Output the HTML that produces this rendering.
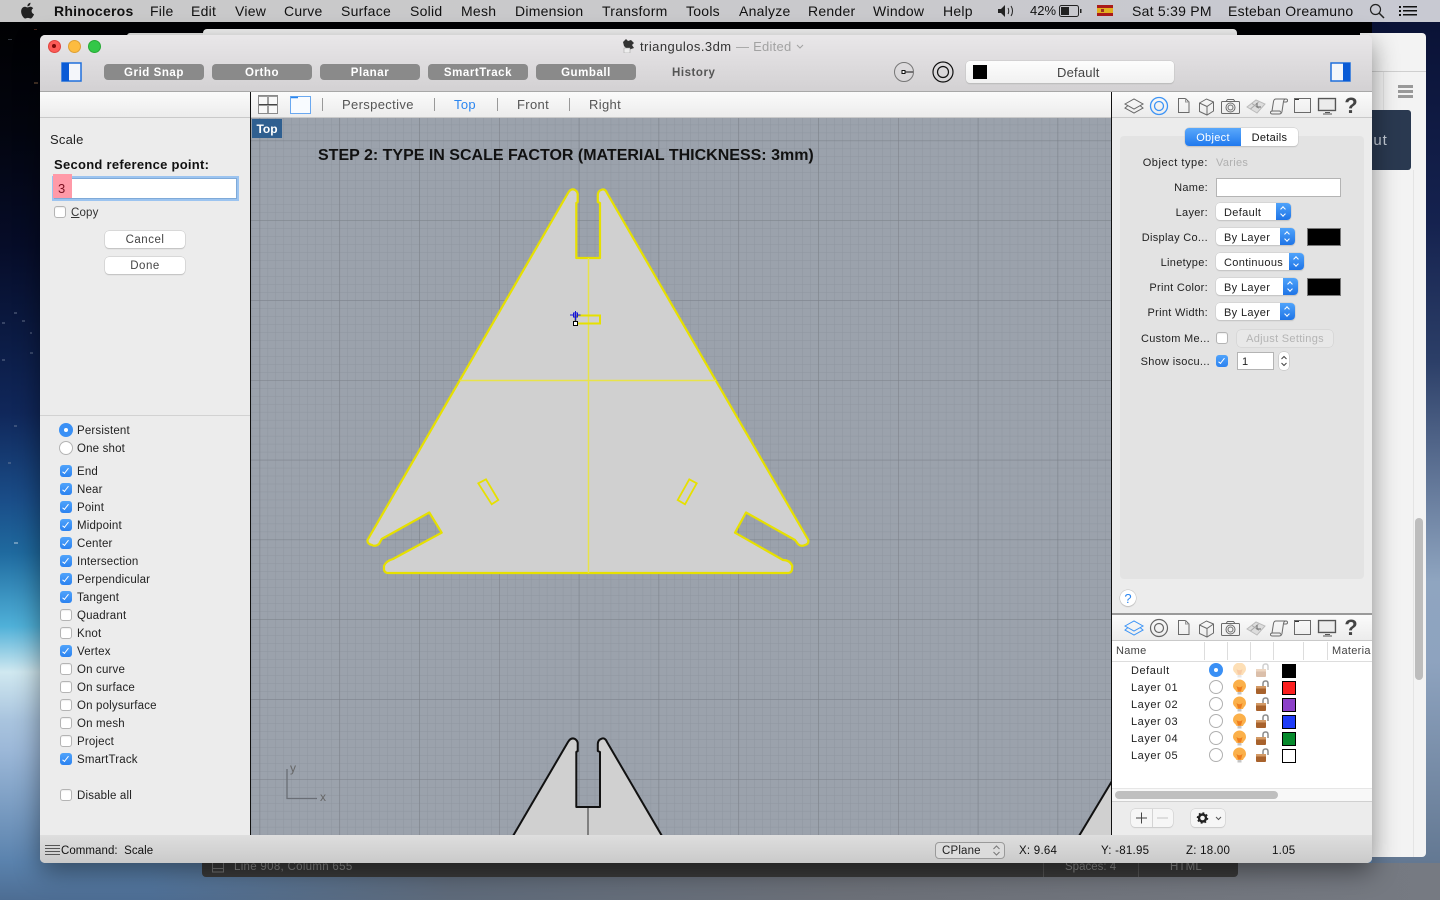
<!DOCTYPE html>
<html><head><meta charset="utf-8"><title>Rhinoceros</title>
<style>
html,body{margin:0;padding:0;width:1440px;height:900px;overflow:hidden;background:#000}
body{font-family:"Liberation Sans",sans-serif;position:relative}
div,span,svg{position:absolute}
.t{white-space:nowrap;line-height:14px;transform:translateY(-6px);color:#222;font-size:11.5px;letter-spacing:.17px}
.m{top:11px;font-size:14px;color:#111;letter-spacing:.25px;transform:translateY(-7px)}
.tb{top:64px;width:100px;height:16px;background:#8a8a8a;border-radius:4px;color:#fff;font-weight:bold;font-size:11.5px;line-height:18px;text-align:center;letter-spacing:.55px}
.vt{top:104px;font-size:13px;color:#555;letter-spacing:.35px}
.sep{top:98px;width:1px;height:13px;background:#999}
.cb{left:60px;width:10px;height:10px;border:1px solid #b4b4b4;border-radius:3px;background:#fff;box-shadow:inset 0 1px 1px #eee}
.ck{width:12px;height:12px;border-radius:3px;background:linear-gradient(#4fa3fb,#2b82f0)}
.ck::after{content:"";position:absolute;left:4.3px;top:1.5px;width:2.4px;height:6px;border:solid #fff;border-width:0 1.6px 1.6px 0;transform:rotate(38deg)}
.lb{color:#222;font-size:11px;letter-spacing:.3px;text-align:right;left:1120px;width:88px}
.dd{left:1216px;height:17px;background:#fff;border-radius:4px;box-shadow:0 0 0 .5px #c8c8c8,0 1px 1px #bbb;font-size:11px;line-height:21px;color:#222;letter-spacing:.35px;text-indent:8px}
.dd i{position:absolute;right:0;top:0;width:15px;height:17px;background:linear-gradient(#4fa3fb,#1f74e6);border-radius:0 4px 4px 0}
.dd i::before,.dd i::after{content:"";position:absolute;left:5px;width:3px;height:3px;border:solid #fff;border-width:1.2px 0 0 1.2px}
.dd i::before{top:4px;transform:rotate(45deg)}
.dd i::after{top:9px;transform:rotate(225deg)}
.sw{left:1307px;width:32px;height:16px;background:#000;border:1px solid #777}
.ly{left:1131px;font-size:11px;color:#222;letter-spacing:.55px}
.rd{left:1209px;width:12px;height:12px;border:1px solid #b0b0b0;border-radius:50%;background:#fff}
.ls{left:1282px;width:12px;height:12px;border:1px solid #000}
.btn{left:105px;width:80px;height:17px;background:#fff;border-radius:4px;box-shadow:0 0 0 .5px #c4c4c4,0 1px 1px #bbb;text-align:center;font-size:11.5px;line-height:19px;color:#444;letter-spacing:.5px}
.hd{top:642px;width:1px;height:18px;background:#ddd}
</style></head><body>

<!-- desktop -->
<div style="left:0;top:0;width:1440px;height:900px;background:linear-gradient(#000 0,#03050f 130px,#060c28 245px,#10275a 413px,#1a4d88 500px,#1f6a9f 553px,#4fb0d8 626px,#d0e8f0 672px,#a9c4de 720px,#9cb8d8 750px,#5a82ad 862px,#4d6d93 900px)"></div>
<div style="left:1372px;top:22px;width:68px;height:878px;background:linear-gradient(#0a1236 0,#15224f 200px,#2c3f68 340px,#8fa5c0 560px,#8ea3bf 640px,#5f748e 860px,#69727e 900px)"></div>
<div style="left:150px;top:863px;width:1290px;height:37px;background:linear-gradient(90deg,rgba(90,120,155,0),#5e6a7a 300px,#6c7078 700px,#767a82 1290px)"></div>
<svg style="left:0;top:22px" width="42" height="560"><g fill="#8a96ac" opacity=".35"><rect x="8" y="17" width="4" height="1"/><rect x="34" y="7" width="3" height="1" fill="#c86040"/><rect x="34" y="60" width="4" height="2" fill="#c89060"/><rect x="2" y="300" width="3" height="2"/><rect x="14" y="290" width="3" height="2"/><rect x="22" y="298" width="3" height="2"/><rect x="30" y="310" width="2" height="2"/><rect x="2" y="337" width="3" height="2"/><rect x="30" y="330" width="3" height="2"/><rect x="14" y="403" width="3" height="2"/><rect x="8" y="440" width="3" height="2"/><rect x="14" y="520" width="4" height="2" fill="#fff"/></g></svg>

<!-- back windows -->
<div style="left:1360px;top:33px;width:66px;height:824px;background:#f3f3f3;border-radius:0 4px 4px 0"></div>
<div style="left:1372px;top:71px;width:54px;height:1px;background:#cfcfcf"></div>
<div style="left:1383px;top:72px;width:1px;height:38px;background:#e2e2e2"></div>
<div style="left:1360px;top:110px;width:51px;height:60px;background:#2a3950;border-radius:0 3px 3px 0"></div>
<div class="t" style="left:1364px;top:140px;font-size:15px;color:#c4ccd6;letter-spacing:1px">out</div>
<div style="left:1398px;top:85px;width:15px;height:3px;background:#999;box-shadow:0 5px 0 #999,0 10px 0 #999"></div>
<div style="left:1413px;top:170px;width:1px;height:687px;background:#e4e4e4"></div>
<div style="left:1415px;top:518px;width:8px;height:162px;background:#bdbdbd;border-radius:4px"></div>
<div style="left:127px;top:33px;width:90px;height:6px;background:#e6e6e6;border-radius:3px 0 0 0"></div>
<div style="left:203px;top:29px;width:1034px;height:10px;background:#f2f2f2;border-radius:4px 4px 0 0"></div>
<div style="left:202px;top:855px;width:1036px;height:22px;background:#3a3a3a;border-radius:0 0 4px 4px"></div>
<svg style="left:212px;top:863px" width="13" height="11"><rect x=".5" y="-2" width="11" height="11" fill="none" stroke="#777"/><path d="M1 5.500h10" stroke="#777"/></svg>
<div class="t" style="left:234px;top:866px;color:#8a8a8a;font-size:11.5px;letter-spacing:.3px">Line 908, Column 655</div>
<div style="left:1043px;top:863px;width:1px;height:14px;background:#555"></div>
<div style="left:1138px;top:863px;width:1px;height:14px;background:#555"></div>
<div class="t" style="left:1065px;top:866px;color:#8a8a8a;font-size:11.5px;letter-spacing:0">Spaces: 4</div>
<div class="t" style="left:1170px;top:866px;color:#8a8a8a;font-size:11.5px">HTML</div>

<!-- menu bar -->
<div style="left:0;top:0;width:1440px;height:22px;background:linear-gradient(90deg,#c9c9c9,#c9c9cc 60%,#c8c9d2)"></div>
<svg style="left:20px;top:2px" width="16" height="17" viewBox="0 0 16 17"><path d="M11.6 9c0-1.800 1.500-2.700 1.600-2.800-.9-1.300-2.300-1.500-2.800-1.500-1.200-.1-2.300.7-2.900.7s-1.500-.7-2.500-.7C3.700 4.700 2.500 5.400 1.800 6.600.4 9 1.400 12.500 2.800 14.500c.7 1 1.500 2 2.500 2s1.400-.6 2.600-.6 1.600.6 2.600.6 1.800-1 2.400-2c.8-1.100 1.100-2.200 1.100-2.300-.1 0-2.400-.9-2.400-3.200zM9.700 3.200C10.200 2.500 10.600 1.600 10.500.7c-.8 0-1.700.5-2.300 1.200-.5.600-.9 1.500-.8 2.400.9.100 1.800-.4 2.300-1.100z" fill="#222"/></svg>
<div class="t m" style="left:54px;font-weight:bold">Rhinoceros</div>
<div class="t m" style="left:150px">File</div>
<div class="t m" style="left:191px">Edit</div>
<div class="t m" style="left:235px">View</div>
<div class="t m" style="left:284px">Curve</div>
<div class="t m" style="left:341px">Surface</div>
<div class="t m" style="left:410px">Solid</div>
<div class="t m" style="left:461px">Mesh</div>
<div class="t m" style="left:515px">Dimension</div>
<div class="t m" style="left:602px">Transform</div>
<div class="t m" style="left:686px">Tools</div>
<div class="t m" style="left:739px">Analyze</div>
<div class="t m" style="left:808px">Render</div>
<div class="t m" style="left:873px">Window</div>
<div class="t m" style="left:943px">Help</div>
<svg style="left:998px;top:4px" width="18" height="14" viewBox="0 0 18 14"><path d="M0 5h3l4-4v12l-4-4H0z" fill="#222"/><path d="M10 4c1 1.500 1 4.500 0 6M13 2c2 3 2 7 0 10" stroke="#222" fill="none"/></svg>
<div class="t m" style="left:1030px;font-size:13px;letter-spacing:0">42%</div>
<svg style="left:1059px;top:5px" width="24" height="13" viewBox="0 0 24 13"><rect x=".5" y=".5" width="19" height="11" rx="2" fill="none" stroke="#222"/><rect x="2" y="2" width="8" height="8" fill="#222"/><rect x="21" y="4" width="1.500" height="4" fill="#222"/></svg>
<svg style="left:1097px;top:5px" width="16" height="11"><rect width="16" height="11" fill="#aa1a1a"/><rect y="3" width="16" height="5" fill="#e2b020"/><rect x="4" y="4" width="3" height="3" fill="#a03020"/></svg>
<div class="t m" style="left:1132px">Sat 5:39 PM</div>
<div class="t m" style="left:1228px">Esteban Oreamuno</div>
<svg style="left:1369px;top:3px" width="16" height="16"><circle cx="6.500" cy="6.500" r="5" fill="none" stroke="#222" stroke-width="1.200"/><path d="M10 10l5 5" stroke="#222" stroke-width="1.500"/></svg>
<svg style="left:1399px;top:5px" width="18" height="12"><g fill="#111"><rect y="1" width="2" height="2"/><rect y="5" width="2" height="2"/><rect y="9" width="2" height="2"/><rect x="4" y="1" width="14" height="1.500"/><rect x="4" y="5" width="14" height="1.500"/><rect x="4" y="9" width="14" height="1.500"/></g></svg>

<!-- main window -->
<div style="left:40px;top:35px;width:1332px;height:828px;background:#ececec;border-radius:5px;box-shadow:0 8px 26px rgba(0,0,0,.45);overflow:hidden">
  <div style="left:0;top:0;width:1332px;height:56px;background:linear-gradient(#e9e7e9,#d3d1d3);border-bottom:1px solid #a8a8a8"></div>
  <div style="left:0;top:57px;width:1332px;height:25px;background:linear-gradient(#fbfbfb,#ececec);border-bottom:1px solid #c9c9c9"></div>
</div>
<div style="left:48px;top:40px;width:11px;height:11px;border-radius:50%;background:#fc5b57;border:.5px solid #e0443e"></div>
<div style="left:52px;top:44px;width:4px;height:4px;border-radius:50%;background:#7a0a08"></div>
<div style="left:68px;top:40px;width:11px;height:11px;border-radius:50%;background:#fdbc40;border:.5px solid #dea034"></div>
<div style="left:88px;top:40px;width:11px;height:11px;border-radius:50%;background:#33c748;border:.5px solid #27aa35"></div>

<svg style="left:622px;top:39px" width="13" height="14" viewBox="0 0 13 14"><path d="M1 3l3-3 2 2 3-1 3 3-2 2 2 3-3 1-2 1-2-1-3-3z" fill="#333"/><rect x="2" y="9" width="6" height="5" fill="#eee" stroke="#999" stroke-width=".5"/></svg>
<div class="t" style="left:640px;top:46px;font-size:13px;color:#333;letter-spacing:.45px">triangulos.3dm</div>
<div class="t" style="left:736px;top:46px;font-size:13px;color:#a2a2a2;letter-spacing:.25px">— Edited</div>
<svg style="left:796px;top:44px" width="8" height="6"><path d="M1 1l3 3 3-3" fill="none" stroke="#a2a2a2"/></svg>

<svg style="left:61px;top:62px" width="21" height="20"><rect x="1" y="1" width="19" height="18" fill="#f4f6fa" stroke="#1f6fdc" stroke-width="1.500"/><rect x="1" y="1" width="7" height="18" fill="#0a5bd6"/></svg>
<div class="tb" style="left:104px">Grid Snap</div>
<div class="tb" style="left:212px">Ortho</div>
<div class="tb" style="left:320px">Planar</div>
<div class="tb" style="left:428px">SmartTrack</div>
<div class="tb" style="left:536px">Gumball</div>
<div class="t" style="left:672px;top:72px;font-weight:bold;font-size:11.5px;color:#555;letter-spacing:.55px">History</div>
<svg style="left:893px;top:61px" width="22" height="22"><circle cx="11" cy="11" r="9.500" fill="none" stroke="#777"/><rect x="9" y="9.500" width="3" height="3" fill="#fff" stroke="#111"/><path d="M12 11h8" stroke="#111"/></svg>
<svg style="left:932px;top:61px" width="22" height="22"><circle cx="11" cy="11" r="10" fill="none" stroke="#111" stroke-width="1.200"/><circle cx="11" cy="11" r="5.500" fill="none" stroke="#111" stroke-width="1.200"/></svg>
<div style="left:966px;top:61px;width:208px;height:22px;background:linear-gradient(#fdfdfd,#f1f1f1);border-radius:4px;box-shadow:0 0 0 .5px #c4c4c4,0 1px 1px #b0b0b0"></div>
<div style="left:973px;top:65px;width:14px;height:14px;background:#000"></div>
<div class="t" style="left:1057px;top:72px;font-size:13px;color:#444;letter-spacing:.2px">Default</div>
<svg style="left:1330px;top:62px" width="21" height="20"><rect x="1" y="1" width="19" height="18" fill="#f4f6fa" stroke="#1f6fdc" stroke-width="1.500"/><rect x="13" y="1" width="7" height="18" fill="#0a5bd6"/></svg>

<!-- viewport tabs -->
<div style="left:250px;top:92px;width:1px;height:743px;background:#111"></div>
<div style="left:1111px;top:92px;width:1px;height:743px;background:#111"></div>
<svg style="left:257px;top:94px" width="22" height="21"><rect x="1.500" y="1.500" width="19" height="18" fill="#f8f8f8" stroke="#8a8a8a"/><path d="M11 2v17M2 10.500h18" stroke="#444"/><path d="M2 2.500h8M12 2.500h8M2 11.500h8M12 11.500h8" stroke="#999"/></svg>
<svg style="left:289px;top:95px" width="23" height="20"><rect x="1.500" y="1.500" width="20" height="17" fill="#f8fbff" stroke="#6aa8f0"/><path d="M2 2.500h7" stroke="#2a86f0" stroke-width="1.500"/></svg>
<div class="sep" style="left:322px"></div>
<div class="sep" style="left:434px"></div>
<div class="sep" style="left:497px"></div>
<div class="sep" style="left:569px"></div>
<div class="t vt" style="left:342px">Perspective</div>
<div class="t vt" style="left:454px;color:#2b86f0">Top</div>
<div class="t vt" style="left:517px">Front</div>
<div class="t vt" style="left:589px">Right</div>

<!-- viewport -->
<svg style="left:251px;top:118px" width="860" height="717" viewBox="251 118 860 717">
<defs>
<pattern id="mi" x="339.4" y="220.4" width="7.98" height="7.98" patternUnits="userSpaceOnUse"><path d="M0 0H7.980M0 0V7.980" stroke="#8f96a0" stroke-width="1" fill="none"/></pattern>
<pattern id="ma" x="339.4" y="220.4" width="79.8" height="79.8" patternUnits="userSpaceOnUse"><path d="M0 0H79.800M0 0V79.800" stroke="#7b8089" stroke-width="1.100" fill="none"/></pattern>
</defs>
<rect x="251" y="118" width="860" height="717" fill="#9ba2ac"/>
<rect x="251" y="118" width="860" height="717" fill="url(#mi)"/>
<rect x="251" y="118" width="860" height="717" fill="url(#ma)"/>
<path d="M367.500 540 L568 193 Q571 188 575 190 Q578 192 577.700 195 L577.700 202 L576.300 203 L576.300 258 L600 258 L600 203 L597.800 202 L597.800 195 Q598 191 601 190 Q605 188 607 193 L808.300 540 Q809 544 805 545 Q801 547 798 544 L795 540 L746 512.500 L735 532.700 L783 560 Q790 560 792.300 566 L792 570 Q791 573 788 573 L388 573 Q385 573 384 570 L384 566 Q386 561 393 559 L441.700 532.700 L429.300 512.500 L381.700 539 L379 544 Q375 547 372 545 Q367 544 367.500 540 Z" fill="#d0d0d0" stroke="#e6e000" stroke-width="2.200" stroke-linejoin="round"/>
<path d="M588.500 258V573" stroke="#e8e34a" stroke-width="1.500"/>
<path d="M460 380.500H716" stroke="#e8e34a" stroke-width="1.500"/>
<path d="M478.300 483.300L486 479.300L498.300 500L491.700 504.300Z M696.700 483.300L689.300 479.300L677.700 500L685 504.300Z" fill="none" stroke="#e6e000" stroke-width="1.800"/>
<path d="M576 315.500H600V323.500H576" fill="none" stroke="#e6e000" stroke-width="2"/>
<path d="M575.500 316V323" stroke="#333" stroke-width="1.500"/>
<path d="M570 315H580.500M575.500 311V320" stroke="#1414d8" stroke-width="1"/>
<rect x="573.500" y="313" width="4" height="4" fill="none" stroke="#1414d8"/>
<rect x="573.500" y="321.500" width="4" height="4" fill="#fff" stroke="#000"/>
<!-- lower copy -->
<path d="M513 836 L568 742 Q571 737 575 739 Q578 741 577.700 744 L577.700 751 L576.300 752 L576.300 807 L600 807 L600 752 L597.800 751 L597.800 744 Q598 740 601 739 Q605 737 607 742 L662 836 Z" fill="#d0d0d0" stroke="#111" stroke-width="2" stroke-linejoin="round"/>
<path d="M588 808V836" stroke="#666" stroke-width="1.500"/>
<path d="M1079 836L1112 781V836Z" fill="#d0d0d0"/>
<path d="M1079 836L1112 781" stroke="#111" stroke-width="2"/>
<path d="M287 769V798.500H317" fill="none" stroke="#6a6e76" stroke-width="1.300"/>
</svg>
<div class="t" style="left:290px;top:767px;font-size:12px;color:#666">y</div>
<div class="t" style="left:320px;top:796px;font-size:12px;color:#666">x</div>
<div style="left:252px;top:119px;width:30px;height:19px;background:#2f5f90;color:#fff;font-weight:bold;font-size:12px;line-height:21px;text-align:center">Top</div>
<div class="t" style="left:318px;top:155px;font-weight:bold;font-size:16px;color:#111;letter-spacing:0">STEP 2: TYPE IN SCALE FACTOR (MATERIAL THICKNESS: 3mm)</div>

<!-- left panel -->
<div class="t" style="left:50px;top:139px;font-size:13px;color:#222;letter-spacing:.2px">Scale</div>
<div class="t" style="left:54px;top:163.500px;font-size:13px;font-weight:bold;color:#111;letter-spacing:.28px">Second reference point:</div>
<div style="left:54px;top:178px;width:181px;height:19px;background:#fff;border:1px solid #7faad8;box-shadow:0 0 0 2px #9cc4f0"></div>
<div style="left:53px;top:174px;width:19px;height:24px;background:#ff9aa8"></div>
<div class="t" style="left:58px;top:187.500px;font-size:13px;color:#7a1020">3</div>
<div class="cb" style="left:54px;top:206px"></div>
<div class="t" style="left:71px;top:212px;font-size:11.5px;color:#333"><u>C</u>opy</div>
<div class="btn" style="top:231px">Cancel</div>
<div class="btn" style="top:257px">Done</div>
<div style="left:40px;top:415px;width:210px;height:1px;background:#d2d2d2"></div>

<div style="left:59px;top:423px;width:14px;height:14px;border-radius:50%;background:#3a90f5"></div>
<div style="left:64px;top:428px;width:4px;height:4px;border-radius:50%;background:#fff"></div>
<div style="left:59px;top:441px;width:12px;height:12px;border-radius:50%;background:#fff;border:1px solid #b4b4b4"></div>
<div class="t" style="left:77px;top:430px">Persistent</div>
<div class="t" style="left:77px;top:448px">One shot</div>

<div class="ck" style="left:60px;top:465px"></div><div class="t" style="left:77px;top:471px">End</div>
<div class="ck" style="left:60px;top:483px"></div><div class="t" style="left:77px;top:489px">Near</div>
<div class="ck" style="left:60px;top:501px"></div><div class="t" style="left:77px;top:507px">Point</div>
<div class="ck" style="left:60px;top:519px"></div><div class="t" style="left:77px;top:525px">Midpoint</div>
<div class="ck" style="left:60px;top:537px"></div><div class="t" style="left:77px;top:543px">Center</div>
<div class="ck" style="left:60px;top:555px"></div><div class="t" style="left:77px;top:561px">Intersection</div>
<div class="ck" style="left:60px;top:573px"></div><div class="t" style="left:77px;top:579px">Perpendicular</div>
<div class="ck" style="left:60px;top:591px"></div><div class="t" style="left:77px;top:597px">Tangent</div>
<div class="cb" style="top:609px"></div><div class="t" style="left:77px;top:615px">Quadrant</div>
<div class="cb" style="top:627px"></div><div class="t" style="left:77px;top:633px">Knot</div>
<div class="ck" style="left:60px;top:645px"></div><div class="t" style="left:77px;top:651px">Vertex</div>
<div class="cb" style="top:663px"></div><div class="t" style="left:77px;top:669px">On curve</div>
<div class="cb" style="top:681px"></div><div class="t" style="left:77px;top:687px">On surface</div>
<div class="cb" style="top:699px"></div><div class="t" style="left:77px;top:705px">On polysurface</div>
<div class="cb" style="top:717px"></div><div class="t" style="left:77px;top:723px">On mesh</div>
<div class="cb" style="top:735px"></div><div class="t" style="left:77px;top:741px">Project</div>
<div class="ck" style="left:60px;top:753px"></div><div class="t" style="left:77px;top:759px">SmartTrack</div>
<div class="cb" style="top:789px"></div><div class="t" style="left:77px;top:795px">Disable all</div>

<!-- status bar -->
<div style="left:40px;top:835px;width:1332px;height:28px;background:linear-gradient(#dedede,#cacaca);border-radius:0 0 5px 5px"></div>
<svg style="left:45px;top:845px" width="15" height="11"><path d="M0 .5h15M0 3.500h15M0 6.500h15M0 9.500h15" stroke="#555"/></svg>
<div class="t" style="left:61px;top:850px;font-size:11.5px;color:#111;letter-spacing:.05px">Command:&nbsp; Scale</div>
<div style="left:935px;top:842px;width:68px;height:15px;border:1px solid #9a9a9a;border-radius:4px;background:#dcdcdc"></div>
<div class="t" style="left:942px;top:850px;font-size:11.5px;color:#222">CPlane</div>
<svg style="left:992px;top:844px" width="9" height="13"><path d="M1.500 5L4.500 2l3 3M1.500 8l3 3 3-3" fill="none" stroke="#777"/></svg>
<div class="t" style="left:1019px;top:850px;color:#111;letter-spacing:.25px">X: 9.64</div>
<div class="t" style="left:1101px;top:850px;color:#111;letter-spacing:.25px">Y: -81.95</div>
<div class="t" style="left:1186px;top:850px;color:#111;letter-spacing:.25px">Z: 18.00</div>
<div class="t" style="left:1272px;top:850px;color:#111;letter-spacing:.25px">1.05</div>

<!-- right panel -->
<div style="left:1112px;top:92px;width:260px;height:743px;background:#ececec"></div>
<div style="left:1112px;top:92px;width:260px;height:25px;background:linear-gradient(#fbfbfb,#ececec);border-bottom:1px solid #c9c9c9"></div>
<svg width="0" height="0" style="left:0;top:0"><defs>
<g id="rest" fill="none" stroke="#6a6a6a" stroke-width="1">
<path d="M1178.500 98.500h7l3.500 3.500v10.500h-10.500z"/><path d="M1185.500 98.500v3.500h3.500" stroke="#999"/>
<path d="M1199.500 103l7-4 7 3v9l-6.500 4-7.500-3.500zM1199.500 103l7.500 3.500 6.500-4.500M1207 106.500v8.500"/>
<rect x="1221.500" y="101.500" width="18" height="12" rx="1"/><path d="M1226 101.500l1.500-2h6l1.500 2"/><circle cx="1230.500" cy="107.500" r="4.500"/><circle cx="1230.500" cy="107.500" r="2.500"/>
<path d="M1247 107l9-7 9 4-8 9z" stroke="#bbb" fill="#ddd"/><path d="M1252 103.500l7 5M1250.500 109l8-7" stroke="#aaa"/><path d="M1257 103v4h4" stroke="#666"/>
<path d="M1276 99h10q1.500 0 1.500 1.500t-1.500 1.500h-2M1276 99q-2 0-2.500 2.500l-1.500 9.500M1286 99q-2 0-2.500 2.500l-1.500 10q-.5 2.500-3 2.500h-6.500q-2 0-2-1.500t2-1.500h7q1 0 1 1.500"/>
<rect x="1294.500" y="98.500" width="16" height="14"/><path d="M1295 99.500h4" stroke="#333"/>
<rect x="1318.500" y="98.500" width="17" height="12" fill="#ddd" stroke="#555" stroke-width="1.300"/><rect x="1320" y="100" width="14" height="9" fill="#ececec" stroke="none"/><path d="M1325 112.500h5M1323 114h9" stroke="#555"/>
</g></defs></svg>
<svg style="left:1112px;top:92px" width="260" height="26" viewBox="1112 92 260 26">
<use href="#rest"/>
<path d="M1125 104l9-5 9 5-9 5zM1127.500 106l-2.500 2 9 5 9-5-2.500-2" fill="none" stroke="#666" stroke-width="1"/>
<circle cx="1159" cy="106" r="8.500" fill="none" stroke="#3d94f6" stroke-width="1.300"/><circle cx="1159" cy="106" r="4.500" fill="none" stroke="#3d94f6" stroke-width="1.300"/>
</svg>
<div style="left:1343px;top:97px;width:16px;text-align:center;font-weight:bold;font-size:22px;line-height:18px;color:#444">?</div>

<div style="left:1120px;top:136px;width:244px;height:443px;background:#e3e3e3;border-radius:4px"></div>
<div style="left:1185px;top:128px;width:113px;height:18px;background:#fff;border-radius:4px;box-shadow:0 0 0 .5px #c8c8c8,0 1px 1px #bbb"></div>
<div style="left:1185px;top:128px;width:56px;height:18px;background:linear-gradient(#5aa8fb,#2079ee);border-radius:4px 0 0 4px;color:#fff;font-size:11px;line-height:20px;text-align:center;letter-spacing:.3px">Object</div>
<div style="left:1241px;top:128px;width:57px;height:18px;color:#111;font-size:11px;line-height:20px;text-align:center;letter-spacing:.3px">Details</div>

<div class="t lb" style="top:162px;letter-spacing:.55px">Object type:</div>
<div class="t" style="left:1216px;top:162px;font-size:11px;color:#b0b0b0;letter-spacing:.3px">Varies</div>
<div class="t lb" style="top:187px">Name:</div>
<div style="left:1216px;top:178px;width:123px;height:17px;background:#fff;border:1px solid #b4b4b4"></div>
<div class="t lb" style="top:212px">Layer:</div>
<div class="dd" style="top:203px;width:75px">Default<i></i></div>
<div class="t lb" style="top:237px">Display Co...</div>
<div class="dd" style="top:228px;width:79px">By Layer<i></i></div>
<div class="sw" style="top:228px"></div>
<div class="t lb" style="top:262px">Linetype:</div>
<div class="dd" style="top:253px;width:88px">Continuous<i></i></div>
<div class="t lb" style="top:287px">Print Color:</div>
<div class="dd" style="top:278px;width:82px">By Layer<i></i></div>
<div class="sw" style="top:278px"></div>
<div class="t lb" style="top:312px">Print Width:</div>
<div class="dd" style="top:303px;width:79px">By Layer<i></i></div>
<div class="t lb" style="top:338px;left:1122px;width:88px">Custom Me...</div>
<div class="cb" style="left:1216px;top:332px"></div>
<div style="left:1237px;top:330px;width:96px;height:17px;background:#e8e8e8;border-radius:4px;box-shadow:0 0 0 .5px #ccc;text-align:center;font-size:11px;line-height:19px;color:#b4b4b4;letter-spacing:.3px">Adjust Settings</div>
<div class="t lb" style="top:361px;left:1122px;width:88px">Show isocu...</div>
<div class="ck" style="left:1216px;top:355px"></div>
<div style="left:1237px;top:352px;width:35px;height:16px;background:#fff;border:1px solid #b4b4b4"></div>
<div class="t" style="left:1242px;top:361px;font-size:11px">1</div>
<div style="left:1279px;top:352px;width:10px;height:18px;background:#fff;border-radius:4px;box-shadow:0 0 0 .5px #bbb"></div>
<svg style="left:1279px;top:352px" width="10" height="18"><path d="M2.500 7L5 4.500 7.500 7M2.500 11L5 13.500 7.500 11" fill="none" stroke="#444"/></svg>

<div style="left:1120px;top:590px;width:16px;height:16px;border-radius:50%;background:#fff;box-shadow:0 0 0 .5px #c0c0c0,0 1px 1px #bbb;color:#2b86f0;font-size:13px;line-height:17px;text-align:center">?</div>

<div style="left:1112px;top:613px;width:260px;height:2px;background:#9a9a9a"></div>
<div style="left:1112px;top:615px;width:260px;height:25px;background:linear-gradient(#fbfbfb,#ececec);border-bottom:1px solid #c9c9c9"></div>
<svg style="left:1112px;top:614px" width="260" height="26" viewBox="1112 92 260 26">
<use href="#rest"/>
<path d="M1125 104l9-5 9 5-9 5zM1127.500 106l-2.500 2 9 5 9-5-2.500-2" fill="none" stroke="#3d94f6" stroke-width="1"/>
<circle cx="1159" cy="106" r="8.500" fill="none" stroke="#666" stroke-width="1.200"/><circle cx="1159" cy="106" r="4.500" fill="none" stroke="#666" stroke-width="1.200"/>
</svg>
<div style="left:1343px;top:619px;width:16px;text-align:center;font-weight:bold;font-size:22px;line-height:18px;color:#444">?</div>

<div style="left:1112px;top:641px;width:260px;height:147px;background:#fff"></div>
<div style="left:1112px;top:661px;width:260px;height:1px;background:#ddd"></div>
<div class="t" style="left:1116px;top:650px;font-size:11px;color:#444;letter-spacing:.3px">Name</div>
<div class="hd" style="left:1204px"></div><div class="hd" style="left:1227px"></div><div class="hd" style="left:1250px"></div><div class="hd" style="left:1273px"></div><div class="hd" style="left:1303px"></div><div class="hd" style="left:1327px"></div>
<div class="t" style="left:1332px;top:650px;font-size:11px;color:#444;letter-spacing:.3px;width:39px;overflow:hidden">Material</div>

<div class="t ly" style="top:670px">Default</div>
<div class="t ly" style="top:687px">Layer 01</div>
<div class="t ly" style="top:704px">Layer 02</div>
<div class="t ly" style="top:721px">Layer 03</div>
<div class="t ly" style="top:738px">Layer 04</div>
<div class="t ly" style="top:755px">Layer 05</div>

<div style="left:1209px;top:663px;width:14px;height:14px;border-radius:50%;background:#3a90f5"></div>
<div style="left:1214px;top:668px;width:4px;height:4px;border-radius:50%;background:#fff"></div>
<div class="rd" style="top:680px"></div><div class="rd" style="top:697px"></div><div class="rd" style="top:714px"></div><div class="rd" style="top:731px"></div><div class="rd" style="top:748px"></div>

<svg style="left:1232px;top:663px" width="40" height="104" viewBox="0 0 40 104">
<defs>
<g id="b"><path d="M1 6a6.500 6.500 0 1 1 13 0c0 3-2.500 4-3 6H4.500C4 10 1 9 1 6z" fill="#fbb04a"/><path d="M4.500 6Q7.500 8.500 10.500 6L9 11.500H6Z" fill="#ef7d1e"/><rect x="5.500" y="12" width="4" height="2.500" fill="#c4c4c4"/></g>
<g id="l"><path d="M31 6V3.500Q31 1 33.500 1H34Q36 1 36 3.500V7" fill="none" stroke="#8c8c8c" stroke-width="1.500"/><rect x="24" y="6" width="10" height="8" rx="1" fill="#a8622c"/><rect x="24" y="6" width="10" height="2.500" fill="#d39a66"/></g>
</defs>
<g opacity=".4"><use href="#b"/><use href="#l"/></g>
<use href="#b" y="17"/><use href="#l" y="17"/>
<use href="#b" y="34"/><use href="#l" y="34"/>
<use href="#b" y="51"/><use href="#l" y="51"/>
<use href="#b" y="68"/><use href="#l" y="68"/>
<use href="#b" y="85"/><use href="#l" y="85"/>
</svg>

<div class="ls" style="top:664px;background:#000"></div>
<div class="ls" style="top:681px;background:#fb1f1f"></div>
<div class="ls" style="top:698px;background:#8c40c8"></div>
<div class="ls" style="top:715px;background:#1e3cf8"></div>
<div class="ls" style="top:732px;background:#068a2c"></div>
<div class="ls" style="top:749px;background:#fff"></div>

<div style="left:1112px;top:788px;width:260px;height:14px;background:#f8f8f8;border-top:1px solid #e6e6e6;border-bottom:1px solid #d0d0d0;box-sizing:border-box"></div>
<div style="left:1115px;top:791px;width:163px;height:8px;background:#bfbfbf;border-radius:4px"></div>
<div style="left:1131px;top:809px;width:42px;height:18px;background:#f6f6f6;border-radius:4px;box-shadow:0 0 0 .5px #c8c8c8,0 1px 1px #ccc"></div>
<div style="left:1152px;top:809px;width:1px;height:18px;background:#d4d4d4"></div>
<svg style="left:1131px;top:809px" width="42" height="18"><path d="M5 9h11M10.500 3.500v11" stroke="#444"/><path d="M26 9h11" stroke="#c4c4c4"/></svg>
<div style="left:1191px;top:809px;width:34px;height:18px;background:#f6f6f6;border-radius:4px;box-shadow:0 0 0 .5px #c8c8c8,0 1px 1px #ccc"></div>
<svg style="left:1191px;top:809px" width="34" height="18"><circle cx="11.500" cy="9" r="3.500" fill="none" stroke="#222" stroke-width="2.400"/><circle cx="11.500" cy="9" r="5" fill="none" stroke="#222" stroke-width="1.500" stroke-dasharray="1.800 2.100"/><path d="M25 8l2.500 2.500L30 8" fill="none" stroke="#555"/></svg>

</body></html>
